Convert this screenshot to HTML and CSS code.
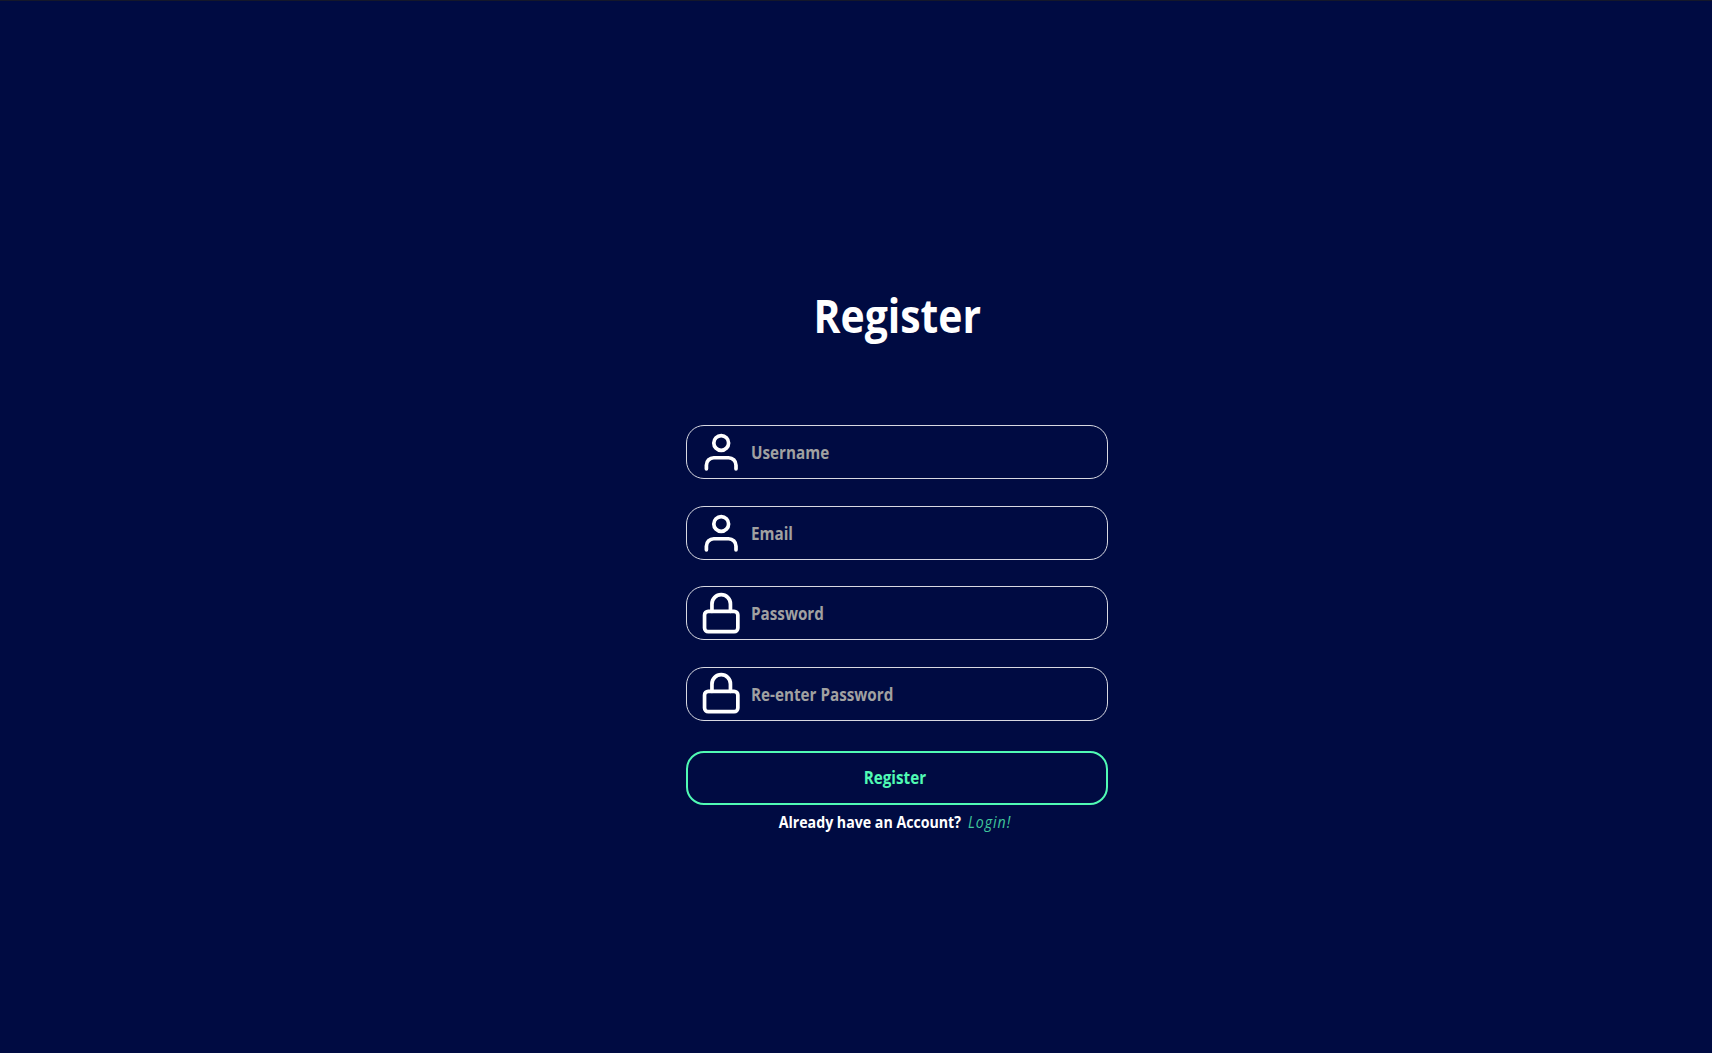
FILE: index.html
```html
<!DOCTYPE html>
<html lang="en">
<head>
<meta charset="utf-8">
<title>Register</title>
<link rel="stylesheet" href="styles.css">
</head>
<body>
<svg class="sprite" aria-hidden="true">
  <symbol id="user" viewBox="0 0 24 24"><path d="M20 21v-2a4 4 0 0 0-4-4H8a4 4 0 0 0-4 4v2"/><circle cx="12" cy="7" r="4"/></symbol>
  <symbol id="lock" viewBox="0 0 24 24"><rect x="3" y="11" width="18" height="11" rx="2"/><path d="M7 11V7a5 5 0 0 1 10 0v4"/></symbol>
</svg>
<main class="page">
  <form class="register">
    <h1 class="title"><span>Register</span></h1>
    <div class="fields">
      <label class="field"><svg class="icon"><use href="#user"/></svg><span class="hint">Username</span></label>
      <label class="field"><svg class="icon"><use href="#user"/></svg><span class="hint">Email</span></label>
      <label class="field"><svg class="icon"><use href="#lock"/></svg><span class="hint">Password</span></label>
      <label class="field"><svg class="icon"><use href="#lock"/></svg><span class="hint">Re-enter Password</span></label>
    </div>
    <button class="submit" type="button"><span>Register</span></button>
    <p class="signin"><span class="question">Already have an Account?</span><a class="login">Login!</a></p>
  </form>
</main>
</body>
</html>
```
FILE: styles.css
```css
* { box-sizing: border-box; }
body {
  margin: 0;
  background: #000b42;
  color: #fff;
  font-family: "Open Sans", "Noto Sans", sans-serif;
}
.sprite { display: none; }
.page {
  height: 100vh;
  border-top: 1px solid #15182a;
  padding-top: 283px;
  overflow: hidden;
}
.register {
  width: 422px;
  margin-left: 686px;
}
.title {
  margin: 0 0 77.4px;
  padding-left: 1px;
  height: 64px;
  line-height: 62px;
  font-size: 47px;
  font-weight: 700;
  text-align: center;
}
.title span,
.submit span {
  display: inline-block;
  transform: scaleX(.87);
}
.fields { display: grid; gap: 26.4px; }
.field {
  display: flex;
  align-items: center;
  height: 54px;
  padding-left: 12px;
  border: 1px solid #d8d9e2;
  border-radius: 18px;
}
.icon {
  width: 44.4px;
  height: 44.4px;
  fill: none;
  stroke: #fff;
  stroke-width: 2;
  stroke-linecap: round;
  stroke-linejoin: round;
}
.hint {
  margin-left: 8px;
  color: #a1a1a1;
  font-size: 17.5px;
  font-weight: 700;
  line-height: 24px;
  transform: scaleX(.87);
  transform-origin: left;
}
.submit {
  display: block;
  width: 100%;
  height: 54px;
  margin-top: 30px;
  padding: 0 5px 2px 0;
  border: 2px solid #50fab4;
  border-radius: 18px;
  background: none;
  color: #50fab4;
  font: inherit;
  font-size: 17.5px;
  font-weight: 700;
}
.signin {
  display: flex;
  justify-content: center;
  gap: 8px;
  margin: 5px 4px 0 0;
  font-size: 16.2px;
  line-height: 24px;
  transform: scaleX(.875);
}
.question { font-weight: 700; }
.login {
  color: #40c89c;
  font-style: italic;
  letter-spacing: 1.1px;
}
```
